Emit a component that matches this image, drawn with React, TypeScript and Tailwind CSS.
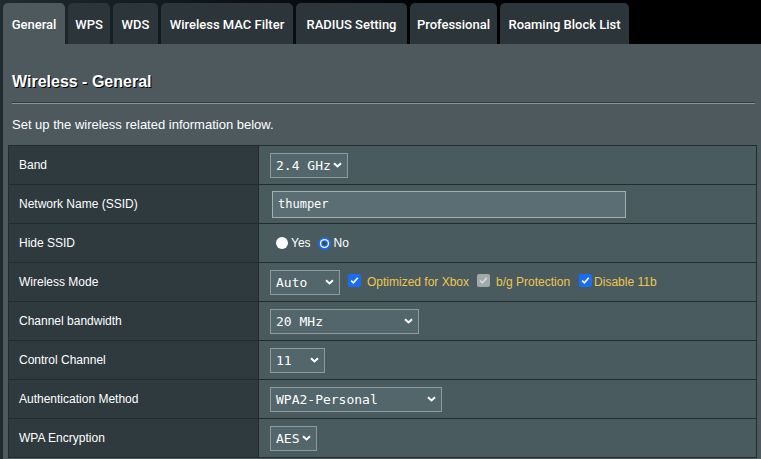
import React from "react";

const tabs = [
  { label: "General", w: "w-[62px]", active: true },
  { label: "WPS", w: "w-[42px]" },
  { label: "WDS", w: "w-[45px]" },
  { label: "Wireless MAC Filter", w: "w-[132px]" },
  { label: "RADIUS Setting", w: "w-[111px]" },
  { label: "Professional", w: "w-[87px]" },
  { label: "Roaming Block List", w: "w-[129px]" },
];

function Chevron() {
  return (
    <svg width="9" height="6" viewBox="0 0 9 6" className="shrink-0">
      <path d="M1 1.2 L4.5 4.5 L8 1.2" fill="none" stroke="#ffffff" strokeWidth="2" />
    </svg>
  );
}

function Sel({ text, w }: { text: string; w: string }) {
  return (
    <div
      className={`${w} h-[25px] border border-[#8e9a9d] bg-[#52666b] flex items-center justify-between pl-[5px] pr-[5px] text-white text-[13px] font-['DejaVu_Sans_Mono',monospace]`}
    >
      <span className="whitespace-pre leading-none">{text}</span>
      <Chevron />
    </div>
  );
}

function Check({ disabled }: { disabled?: boolean }) {
  return (
    <span
      className={`inline-flex items-center justify-center w-[13px] h-[13px] rounded-[2px] ${
        disabled ? "bg-[#a3a8ab]" : "bg-[#1a6cf0]"
      }`}
    >
      <svg width="11" height="11" viewBox="0 0 11 11">
        <path
          d="M2.2 5.6 L4.4 7.8 L8.8 2.8"
          fill="none"
          stroke={disabled ? "#d7dadc" : "#ffffff"}
          strokeWidth="1.7"
        />
      </svg>
    </span>
  );
}

function Row({ label, children }: { label: string; children: React.ReactNode }) {
  return (
    <div className="flex h-[39px] border-b border-[#222b2e]">
      <div className="w-[250px] shrink-0 bg-[#2f3a3e] border-r border-[#222b2e] flex items-center pl-[10px] text-white text-[12px]">
        {label}
      </div>
      <div className="flex-1 bg-[#4a5b60] flex items-center pl-[11px]">{children}</div>
    </div>
  );
}

export default function App() {
  return (
    <div className="w-[761px] h-[459px] overflow-hidden bg-[linear-gradient(90deg,#1e2c31_0%,#0a0f11_35%,#000_60%)] font-['Liberation_Sans',Arial,sans-serif]">
      <div className="h-[44px] flex items-end gap-[3px] pl-[3px]">
        {tabs.map((t) => (
          <div
            key={t.label}
            className={`${t.w} h-[41px] pt-[3px] rounded-t-[5px] flex items-center justify-center text-white text-[13px] font-medium font-['Roboto',sans-serif] ${
              t.active ? "bg-[#4d595d]" : "bg-[#2c3539]"
            }`}
          >
            {t.label}
          </div>
        ))}
      </div>
      <div className="ml-[3px] h-[415px] bg-[#4d595d] pl-[5px] pr-[4px]">
        <div className="pl-[4px] pr-[2px]">
          <div className="pt-[28px] text-white text-[16px] font-bold leading-[20px] [text-shadow:1px_1px_0_#000]">
            Wireless - General
          </div>
          <div className="mt-[10px] h-[2px] border-t border-[#2e3a3e] bg-[#8a9599]" />
          <div className="mt-[13px] text-white text-[13px] leading-[16px]">
            Set up the wireless related information below.
          </div>
        </div>
        <div className="mt-[12px] border-t border-l border-r border-[#222b2e]">
          <Row label="Band">
            <Sel text="2.4 GHz" w="w-[78px]" />
          </Row>
          <Row label="Network Name (SSID)">
            <div className="ml-[2px] w-[354px] h-[27px] border border-[#a3aeb1] bg-[#5b6e73] flex items-center pl-[5px] text-white text-[12px] font-['DejaVu_Sans_Mono',monospace]">
              thumper
            </div>
          </Row>
          <Row label="Hide SSID">
            <div className="flex items-center text-white text-[12px] ml-[6px]">
              <span className="w-[12px] h-[12px] rounded-full bg-white" />
              <span className="ml-[3px]">Yes</span>
              <svg width="13" height="13" viewBox="0 0 13 13" className="ml-[7px]">
                <circle cx="6.5" cy="6.5" r="6.5" fill="#1a6cf0" />
                <circle cx="6.5" cy="6.5" r="4.6" fill="#ffffff" />
                <circle cx="6.5" cy="6.5" r="3.3" fill="#1a6cf0" />
                <circle cx="6.5" cy="6.5" r="2" fill="#3d4d52" />
              </svg>
              <span className="ml-[3px]">No</span>
            </div>
          </Row>
          <Row label="Wireless Mode">
            <Sel text="Auto" w="w-[70px]" />
            <div className="flex items-center text-[#eec64c] text-[12px]">
              <span className="ml-[8px] -mt-[4px] flex"><Check /></span>
              <span className="ml-[6px]">Optimized for Xbox</span>
              <span className="ml-[8px] -mt-[4px] flex"><Check disabled /></span>
              <span className="ml-[6px]">b/g Protection</span>
              <span className="ml-[9px] -mt-[4px] flex"><Check /></span>
              <span className="ml-[2px]">Disable 11b</span>
            </div>
          </Row>
          <Row label="Channel bandwidth">
            <Sel text="20 MHz" w="w-[149px]" />
          </Row>
          <Row label="Control Channel">
            <Sel text="11" w="w-[55px]" />
          </Row>
          <Row label="Authentication Method">
            <Sel text="WPA2-Personal" w="w-[172px]" />
          </Row>
          <Row label="WPA Encryption">
            <Sel text="AES" w="w-[47px]" />
          </Row>
        </div>
      </div>
    </div>
  );
}
